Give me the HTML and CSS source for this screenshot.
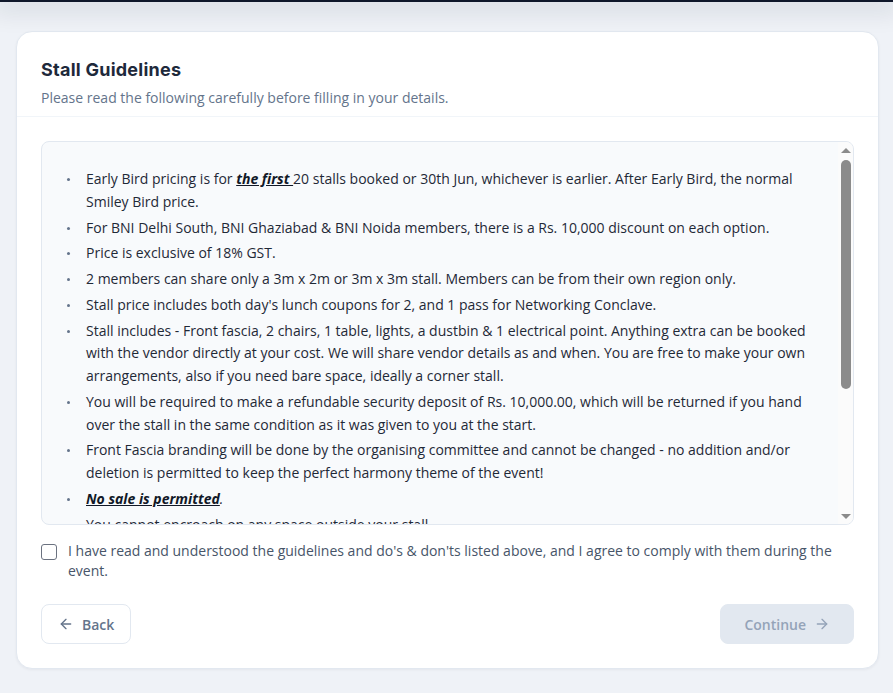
FILE: index.html
```html
<!DOCTYPE html>
<html lang="en">
<head>
<meta charset="utf-8">
<title>Stall Guidelines</title>
<link rel="stylesheet" href="styles.css">
</head>
<body>
<div class="topbar"></div>
<main class="page">
  <section class="card">
    <header class="card-head">
      <h1 class="title">Stall Guidelines</h1>
      <p class="subtitle">Please read the following carefully before filling in your details.</p>
    </header>
    <div class="card-body">
      <div class="guidelines">
        <div class="guidelines-content">
          <ul class="rules">
            <li>Early Bird pricing is for <em><strong><u>the first </u></strong></em>20 stalls booked or 30th Jun, whichever is earlier. After Early Bird, the normal Smiley Bird price.</li>
            <li>For BNI Delhi South, BNI Ghaziabad &amp; BNI Noida members, there is a Rs. 10,000 discount on each option.</li>
            <li>Price is exclusive of 18% GST.</li>
            <li>2 members can share only a 3m x 2m or 3m x 3m stall. Members can be from their own region only.</li>
            <li>Stall price includes both day's lunch coupons for 2, and 1 pass for Networking Conclave.</li>
            <li>Stall includes - Front fascia, 2 chairs, 1 table, lights, a dustbin &amp; 1 electrical point. Anything extra can be booked with the vendor directly at your cost. We will share vendor details as and when. You are free to make your own arrangements, also if you need bare space, ideally a corner stall.</li>
            <li>You will be required to make a refundable security deposit of Rs. 10,000.00, which will be returned if you hand over the stall in the same condition as it was given to you at the start.</li>
            <li>Front Fascia branding will be done by the organising committee and cannot be changed - no addition and/or deletion is permitted to keep the perfect harmony theme of the event!</li>
            <li><em><strong><u>No sale is permitted</u></strong>.</em></li>
            <li>You cannot encroach on any space outside your stall.</li>
            <li>Stall allotment will be done by the organising committee and its decision will be final.</li>
            <li>Set-up must be completed before the event opens and stalls must stay manned during event hours.</li>
            <li>Booking amount once paid is non-refundable and non-transferable.</li>
          </ul>
        </div>
        <div class="scrollbar" aria-hidden="true">
          <div class="sb-btn"><span class="sb-arrow-up"></span></div>
          <div class="sb-track"><div class="sb-thumb"></div></div>
          <div class="sb-btn"><span class="sb-arrow-down"></span></div>
        </div>
      </div>
      <label class="agree">
        <input type="checkbox" class="agree-box">
        <span class="agree-text">I have read and understood the guidelines and do's &amp; don'ts listed above, and I agree to comply with them during the event.</span>
      </label>
      <div class="actions">
        <button class="btn btn-back" type="button">
          <svg class="icon" viewBox="0 0 24 24" width="16" height="16" fill="none" stroke="currentColor" stroke-width="2" stroke-linecap="round" stroke-linejoin="round"><path d="M19 12H5"/><path d="M12 19l-7-7 7-7"/></svg>
          <span>Back</span>
        </button>
        <button class="btn btn-continue" type="button" disabled>
          <span>Continue</span>
          <svg class="icon" viewBox="0 0 24 24" width="16" height="16" fill="none" stroke="currentColor" stroke-width="2" stroke-linecap="round" stroke-linejoin="round"><path d="M5 12h14"/><path d="M12 5l7 7-7 7"/></svg>
        </button>
      </div>
    </div>
  </section>
</main>
</body>
</html>
```
FILE: styles.css
```css
* { box-sizing: border-box; }

html, body {
  margin: 0;
  padding: 0;
  height: 100%;
}

body {
  background: #eff2f7;
  font-family: "Open Sans", "Liberation Sans", sans-serif;
  color: #1e293b;
  overflow: hidden;
}

.topbar {
  height: 2px;
  background: #0f172a;
  box-shadow: 0 2px 24px 8px rgba(15, 23, 42, 0.11);
  position: relative;
  z-index: 2;
}

.page {
  padding: 29px 14px 24px 16px;
}

.card {
  background: #ffffff;
  border: 1px solid #e2e8f0;
  border-radius: 16px;
  box-shadow: 0 1px 3px rgba(15, 23, 42, 0.05);
}

.card-head {
  padding: 24px 24px 8px;
  border-bottom: 1px solid #f1f5f9;
}

.title {
  margin: 0;
  font-family: Inter, "Open Sans", sans-serif;
  font-size: 18px;
  font-weight: 700;
  line-height: 28px;
  color: #1e293b;
  letter-spacing: 0.25px;
}

.subtitle {
  margin: 4px 0 0;
  font-size: 14px;
  line-height: 20px;
  color: #64748b;
}

.card-body {
  padding: 24px;
}

.guidelines {
  display: flex;
  height: 384px;
  background: #f8fafc;
  border: 1px solid #e2e8f0;
  border-radius: 8px;
  overflow: hidden;
}

.guidelines-content {
  flex: 1;
  min-width: 0;
  overflow: hidden;
  padding: 26px 20px 24px;
}

.scrollbar {
  flex: 0 0 15px;
  display: flex;
  flex-direction: column;
  background: #fbfbfb;
}

.sb-btn {
  height: 16px;
  display: flex;
  align-items: center;
  justify-content: center;
  padding-left: 1px;
}

.sb-arrow-up,
.sb-arrow-down {
  width: 0;
  height: 0;
  border-left: 5px solid transparent;
  border-right: 5px solid transparent;
}

.sb-arrow-up {
  border-bottom: 5px solid #8b8b8b;
}

.sb-arrow-down {
  border-top: 5px solid #8b8b8b;
}

.sb-track {
  flex: 1;
  padding: 2px 2px 0 3px;
}

.sb-thumb {
  height: 229px;
  background: #8b8b8b;
  border-radius: 5px;
}

.rules {
  list-style: none;
  margin: 0;
  padding: 0 0 0 24px;
  font-size: 14px;
  line-height: 22.75px;
  color: #1f2937;
}

.rules li {
  position: relative;
  margin-bottom: 3px;
}

.rules li::before {
  content: "";
  position: absolute;
  left: -19px;
  top: 10px;
  width: 3px;
  height: 3px;
  border-radius: 50%;
  background: #64748b;
}

.rules em strong, .rules u {
  color: #111827;
}

.agree {
  display: flex;
  align-items: flex-start;
  gap: 11px;
  margin-top: 16px;
  cursor: pointer;
}

.agree-box {
  appearance: none;
  flex: 0 0 16px;
  width: 16px;
  height: 16px;
  margin: 3px 0 0;
  border: 1px solid #6b7280;
  border-radius: 3px;
  background: #fff;
}

.agree-text {
  font-size: 14px;
  line-height: 20px;
  color: #475569;
}

.actions {
  display: flex;
  justify-content: space-between;
  align-items: center;
  margin-top: 23px;
}

.btn {
  display: inline-flex;
  align-items: center;
  gap: 8px;
  height: 40px;
  padding: 0 16px;
  border-radius: 8px;
  font-family: "Open Sans", sans-serif;
  font-size: 14px;
  font-weight: 600;
  cursor: pointer;
}

.btn-back {
  background: #ffffff;
  border: 1px solid #e2e8f0;
  color: #64748b;
}

.btn-continue {
  background: #e2e8f0;
  border: 1px solid #e2e8f0;
  color: #94a3b8;
  padding: 0 23px;
}

.icon {
  display: block;
}
```
